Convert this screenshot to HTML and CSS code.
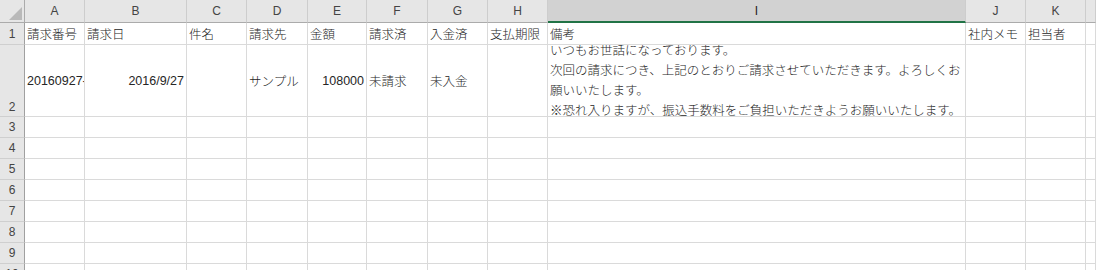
FILE: index.html
```html
<!DOCTYPE html>
<html lang="ja">
<head>
  <meta charset="UTF-8">
  <title>請求一覧</title>
  <link rel="stylesheet" href="styles.css">
</head>
<body>
  <div class="sheet">
    <!--列見出し-->
    <div class="row head">
      <div class="corner"></div>
      <div>A</div><div>B</div><div>C</div><div>D</div><div>E</div><div>F</div>
      <div>G</div><div>H</div><div class="sel">I</div><div>J</div><div>K</div><div></div>
    </div>
    <div class="row r1">
      <div class="rh">1</div>
      <div>請求番号</div><div>請求日</div><div>件名</div><div>請求先</div><div>金額</div><div>請求済</div>
      <div>入金済</div><div>支払期限</div><div>備考</div><div>社内メモ</div><div>担当者</div><div></div>
    </div>
    <div class="row r2">
      <div class="rh">2</div>
      <div>20160927-1</div><div class="num">2016/9/27</div><div></div><div>サンプル</div>
      <div class="num">108000</div><div>未請求</div><div>未入金</div><div></div>
      <div class="memo">
        <p>いつもお世話になっております。</p>
        <p>次回の請求につき、上記のとおりご請求させていただきます。よろしくお</p>
        <p>願いいたします。</p>
        <p>※恐れ入りますが、振込手数料をご負担いただきようお願いいたします。</p>
      </div>
      <div></div><div></div><div></div>
    </div>
    <div class="row"><div class="rh">3</div><div></div><div></div><div></div><div></div><div></div><div></div><div></div><div></div><div></div><div></div><div></div><div></div></div>
    <div class="row"><div class="rh">4</div><div></div><div></div><div></div><div></div><div></div><div></div><div></div><div></div><div></div><div></div><div></div><div></div></div>
    <div class="row"><div class="rh">5</div><div></div><div></div><div></div><div></div><div></div><div></div><div></div><div></div><div></div><div></div><div></div><div></div></div>
    <div class="row"><div class="rh">6</div><div></div><div></div><div></div><div></div><div></div><div></div><div></div><div></div><div></div><div></div><div></div><div></div></div>
    <div class="row"><div class="rh">7</div><div></div><div></div><div></div><div></div><div></div><div></div><div></div><div></div><div></div><div></div><div></div><div></div></div>
    <div class="row"><div class="rh">8</div><div></div><div></div><div></div><div></div><div></div><div></div><div></div><div></div><div></div><div></div><div></div><div></div></div>
    <div class="row"><div class="rh">9</div><div></div><div></div><div></div><div></div><div></div><div></div><div></div><div></div><div></div><div></div><div></div><div></div></div>
    <div class="row"><div class="rh">10</div><div></div><div></div><div></div><div></div><div></div><div></div><div></div><div></div><div></div><div></div><div></div><div></div></div>
  </div>
</body>
</html>
```

FILE: styles.css
```css
*{
  margin: 0;
  padding: 0;
  box-sizing: border-box;
}
html, body{
  height: 100%;
  overflow: hidden;
}
body{
  background: #fff;
  font-family: "Liberation Sans", "Noto Sans CJK JP", sans-serif;
  font-size: 12.5px;
  font-weight: 300;
  color: #262626;
}
.row{
  display: grid;
  /*行見出し + A～K + 残り*/
  grid-template-columns: 25px 60px 102px 60px 61px 59px 61px 60px 60px 418px 60px 60px 1fr;
  height: 21px;
}
.row > div{
  display: flex;
  align-items: center;
  padding: 0 2px;
  white-space: nowrap;
  overflow: hidden;
  border-right: 1px solid #dadada;
  border-bottom: 1px solid #dadada;
}
.row .num{
  justify-content: flex-end;
}
.r1{
  height: 22px;
}
.r2{
  height: 72px;
}
/*見出し*/
.head{
  height: 23px;
}
.head > div{
  justify-content: center;
  background: #e6e6e6;
  color: #444;
  font-size: 12px;
  font-weight: 400;
  border-right-color: #cdcdcd;
  border-bottom-color: #ababab;
}
.head .sel{
  background: #d2d2d2;
  color: #222;
  border-bottom: 2px solid #217346;
}
.head .corner{
  align-items: flex-end;
  justify-content: flex-end;
  padding: 0 2px 2px 0;
  border-right-color: #ababab;
}
.corner:after{
  content: "";
  border-left: 13px solid transparent;
  border-bottom: 13px solid #b9b9b9;
}
.row .rh{
  justify-content: center;
  background: #e6e6e6;
  color: #444;
  font-size: 12px;
  font-weight: 400;
  border-right-color: #a0a0a0;
  border-bottom-color: #cfcfcf;
}
.r2 .rh{
  align-items: flex-end;
  padding-bottom: 2px;
}
/*備考は折り返して上下にはみ出す*/
.row .memo{
  flex-direction: column;
  justify-content: center;
  align-items: flex-start;
  line-height: 20px;
}
```
